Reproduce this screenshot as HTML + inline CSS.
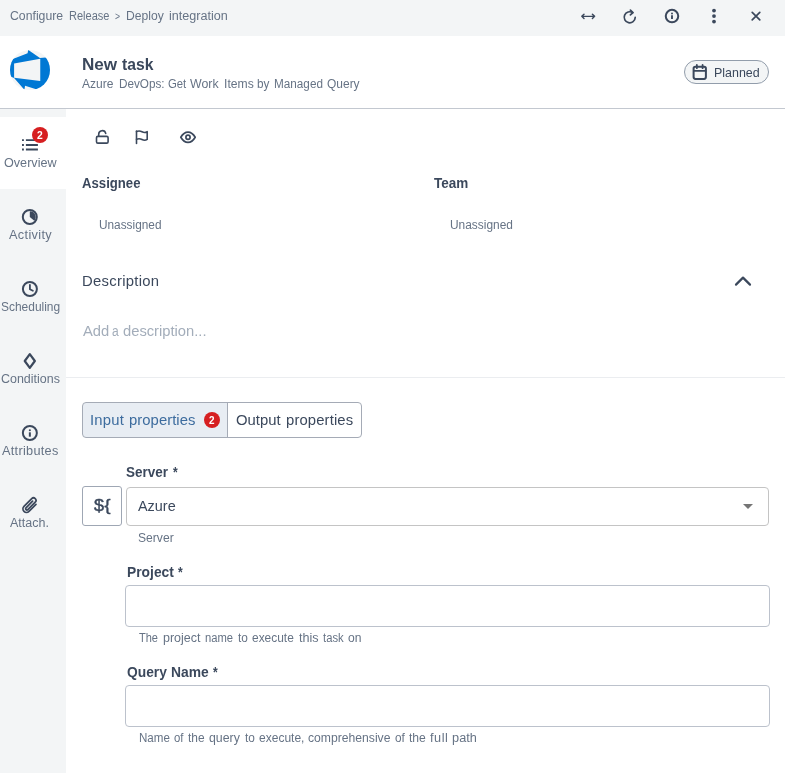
<!DOCTYPE html>
<html lang="en">
<head>
<meta charset="utf-8">
<title>New task</title>
<style>
html,body{margin:0;padding:0;}
body{width:785px;height:773px;overflow:hidden;background:#fff;font-family:"Liberation Sans",sans-serif;position:relative;}
.abs{position:absolute;box-sizing:border-box;}
.t{position:absolute;white-space:pre;transform-origin:0 0;font-family:"Liberation Sans",sans-serif;}
svg{position:absolute;left:0;top:0;overflow:visible;}
</style>
</head>
<body>
<!-- top bar -->
<div class="abs" style="left:0;top:0;width:785px;height:36px;background:#f3f5f6;"></div>
<!-- header border -->
<div class="abs" style="left:0;top:108px;width:785px;height:1px;background:#c3c8d0;"></div>
<!-- sidebar -->
<div class="abs" style="left:0;top:109px;width:66px;height:664px;background:#f3f5f6;"></div>
<div class="abs" style="left:0;top:117px;width:66px;height:72px;background:#fff;"></div>
<!-- description separator -->
<div class="abs" style="left:66px;top:377px;width:719px;height:1px;background:#ebedf0;"></div>
<!-- status chip -->
<div class="abs" style="left:684px;top:60px;width:85px;height:24px;border:1px solid #929dab;border-radius:12px;background:#f3f5f6;"></div>
<!-- tabs -->
<div class="abs" style="left:82px;top:402px;width:280px;height:36px;border:1px solid #a5abb6;border-radius:4px;background:linear-gradient(to right,#e8edf3 0,#e8edf3 144px,#a5abb6 144px,#a5abb6 145px,#fff 145px);"></div>
<!-- variable button -->
<div class="abs" style="left:82px;top:486px;width:40px;height:40px;border:1px solid #9fa7b4;border-radius:3px;background:#fff;"></div>
<!-- select -->
<div class="abs" style="left:126px;top:487px;width:643px;height:39px;border:1px solid #c4c4c4;border-radius:4px;background:#fff;"></div>
<!-- inputs -->
<div class="abs" style="left:125px;top:585px;width:645px;height:42px;border:1px solid #bcc2cc;border-radius:4px;background:#fff;"></div>
<div class="abs" style="left:125px;top:685px;width:645px;height:42px;border:1px solid #bcc2cc;border-radius:4px;background:#fff;"></div>

<svg width="785" height="773" viewBox="0 0 785 773" fill="none" stroke="#3b485c" stroke-width="1.8" stroke-linecap="round" stroke-linejoin="round">
  <!-- logo -->
  <defs><clipPath id="lc"><circle cx="30" cy="70" r="20"/></clipPath></defs>
  <circle cx="30" cy="70" r="20" fill="#f3f5f6" stroke="none"/>
  <g clip-path="url(#lc)" stroke="none" fill="#0078d4">
    <path fill-rule="evenodd" d="M28.2 49.9L39.95 58L45.6 57.55L53 57V92H45L25.05 85.75L24.4 89.7L14.1 78L11.1 76.7L7 75V61L13.5 58.8L27.6 53.35ZM14.1 63.6L40.25 58.75V80.9L14.1 77.7Z"/>
  </g>
  <!-- top bar icons -->
  <g id="i-expand" stroke-width="1.45"><path d="M581.800 16.350H594.600M584 14.150l-2.200 2.200 2.200 2.200M592.400 14.150l2.200 2.200-2.200 2.200"/></g>
  <g id="i-refresh" stroke-width="1.7" transform="translate(0.1 0.35)"><path d="M632.6 12.3A5.5 5.5 0 1 0 635.1 17.1"/><path d="M630.3 9.7l2.6 2.5-2.6 2.4"/></g>
  <g id="i-info" stroke-width="2"><circle cx="672" cy="16.1" r="6.25"/><path d="M672 15.2V19" stroke-width="1.9" stroke-linecap="butt"/><circle cx="672" cy="13.5" r="0.95" fill="#3b485c" stroke="none"/></g>
  <g id="i-kebab" fill="#3b485c" stroke="none"><circle cx="714" cy="10.6" r="1.9"/><circle cx="714" cy="16.1" r="1.9"/><circle cx="714" cy="21.6" r="1.9"/></g>
  <g id="i-close" stroke-width="1.7"><path d="M752.200 12.300l7.600 7.600M759.800 12.300l-7.600 7.600"/></g>
  <!-- calendar -->
  <g id="i-cal" stroke-width="2"><rect x="693.6" y="66.75" width="12.3" height="12.15" rx="1.8"/><path d="M694 70.9H705.5" stroke-width="1.9"/><path d="M696.85 65V68.2M702.6 65V68.2" stroke-width="1.8"/></g>
  <!-- toolbar icons -->
  <g id="i-lock" stroke-width="1.6"><rect x="96.5" y="136.4" width="11.6" height="6.7" rx="1.4"/><path d="M98.7 136.2V134.4a3.55 3.55 0 0 1 7 -1"/></g>
  <g id="i-flag" stroke-width="1.6"><path d="M136.5 131V143.4"/><path d="M136.5 131.500c2.200-.800 4.000-.500 5.500.300s3.600.900 5.200-.100V139.400c-1.600 1-3.700.900-5.200.100s-3.300-1.100-5.500-.300"/></g>
  <g id="i-eye" stroke-width="1.7"><path d="M180.800 137.200c2-3.400 4.400-5.100 7.200-5.100s5.200 1.700 7.200 5.100c-2 3.400-4.400 5.100-7.200 5.100s-5.200-1.700-7.200-5.100z"/><circle cx="188" cy="137.200" r="2.100"/></g>
  <!-- chevron -->
  <path d="M736 284.6l7-7 7 7" stroke-width="2.2"/>
  <!-- select arrow -->
  <path d="M743 504h10l-5 5z" fill="#757575" stroke="none"/>
  <!-- sidebar icons -->
  <g id="s-overview" stroke-width="1.9" stroke-linecap="butt"><path d="M25.900 140.100H37.900M25.900 144.950H37.900M25.900 149.550H37.900"/><path d="M22 140.100h1.900M22 144.950h1.900M22 149.550h1.900"/></g>
  <g id="s-activity" stroke-width="2"><circle cx="29.800" cy="217" r="7"/><path d="M29.800 211.200A5.800 5.800 0 0 1 34.300 220.700L29.800 217z" fill="#3b485c" stroke="none"/></g>
  <g id="s-sched" stroke-width="2"><circle cx="29.900" cy="289" r="7"/><path d="M29.900 284.800V289.200l3 1.500" stroke-width="1.8"/></g>
  <g id="s-cond" stroke-width="2.2"><path d="M29.800 354.100l5.050 6.900-5.050 6.900-5.050-6.900z"/></g>
  <g id="s-attr" stroke-width="2"><circle cx="29.850" cy="433" r="7"/><path d="M29.850 432.300V436.700" stroke-width="2" stroke-linecap="butt"/><circle cx="29.850" cy="430.200" r="1.050" fill="#3b485c" stroke="none"/></g>
  <g id="s-attach" stroke-width="1.65" transform="translate(29.5 504.9) scale(1.06) translate(-29.5 -504.1)"><path d="M35.600 503.600l-6.600 6.600a3.300 3.300 0 0 1-4.700-4.700l7.300-7.300a2.300 2.300 0 0 1 3.300 3.300l-7 7a1.200 1.200 0 0 1-1.700-1.700l6.200-6.200"/></g>
</svg>
<div class="abs" style="left:204px;top:412px;width:16px;height:16px;border-radius:8px;background:#d61f21;"></div>
<!-- sidebar badge -->
<div class="abs" style="left:32px;top:127px;width:16px;height:16px;border-radius:8px;background:#d61f21;"></div>

<div id="txt" style="position:absolute;left:0;top:0;width:785px;height:773px;will-change:transform;">
<span class="t" style="left:10.40px;top:9.00px;font-size:12px;line-height:14px;font-weight:400;color:#667385;letter-spacing:0.000px;transform:scaleX(1.0218);">Configure </span>
<span class="t" style="left:68.50px;top:9.00px;font-size:12px;line-height:14px;font-weight:400;color:#667385;letter-spacing:0.000px;transform:scaleX(0.9199);">Release</span>
<span class="t" style="left:115.32px;top:11.00px;font-size:10px;line-height:11px;font-weight:400;color:#667385;letter-spacing:0.000px;transform:scaleX(0.8600);">&gt;</span>
<span class="t" style="left:126.10px;top:9.00px;font-size:12px;line-height:14px;font-weight:400;color:#667385;letter-spacing:0.000px;transform:scaleX(1.0093);">Deploy </span>
<span class="t" style="left:168.90px;top:9.00px;font-size:12px;line-height:14px;font-weight:400;color:#667385;letter-spacing:0.000px;transform:scaleX(1.0494);">integration</span>
<span class="t" style="left:81.86px;top:55.00px;font-size:16.5px;line-height:18px;font-weight:700;color:#3b485c;letter-spacing:0.000px;transform:scaleX(1.0365);">New </span>
<span class="t" style="left:122.30px;top:55.00px;font-size:16.5px;line-height:18px;font-weight:700;color:#3b485c;letter-spacing:0.000px;transform:scaleX(0.9513);">task</span>
<span class="t" style="left:82.10px;top:77.00px;font-size:12px;line-height:14px;font-weight:400;color:#667385;letter-spacing:0.000px;transform:scaleX(1.0040);">Azure </span>
<span class="t" style="left:118.50px;top:77.00px;font-size:12px;line-height:14px;font-weight:400;color:#667385;letter-spacing:0.000px;transform:scaleX(0.9774);">DevOps: </span>
<span class="t" style="left:167.90px;top:77.00px;font-size:12px;line-height:14px;font-weight:400;color:#667385;letter-spacing:0.000px;transform:scaleX(0.9446);">Get </span>
<span class="t" style="left:190.30px;top:77.00px;font-size:12px;line-height:14px;font-weight:400;color:#667385;letter-spacing:0.000px;transform:scaleX(1.0285);">Work </span>
<span class="t" style="left:223.69px;top:77.00px;font-size:12px;line-height:14px;font-weight:400;color:#667385;letter-spacing:0.000px;transform:scaleX(1.0128);">Items </span>
<span class="t" style="left:257.40px;top:77.00px;font-size:12px;line-height:14px;font-weight:400;color:#667385;letter-spacing:0.000px;transform:scaleX(0.9784);">by </span>
<span class="t" style="left:274.20px;top:77.00px;font-size:12px;line-height:14px;font-weight:400;color:#667385;letter-spacing:0.000px;transform:scaleX(0.9784);">Managed </span>
<span class="t" style="left:326.90px;top:77.00px;font-size:12px;line-height:14px;font-weight:400;color:#667385;letter-spacing:0.000px;transform:scaleX(0.9976);">Query</span>
<span class="t" style="left:713.74px;top:65.00px;font-size:13px;line-height:15px;font-weight:400;color:#3b485c;letter-spacing:0.000px;transform:scaleX(0.9574);">Planned</span>
<span class="t" style="left:3.50px;top:156.00px;font-size:12px;line-height:14px;font-weight:400;color:#667385;letter-spacing:0.000px;transform:scaleX(1.0508);">Overview</span>
<span class="t" style="left:8.70px;top:228.00px;font-size:12px;line-height:14px;font-weight:400;color:#667385;letter-spacing:0.326px;transform:scaleX(1.0600);">Activity</span>
<span class="t" style="left:0.90px;top:300.00px;font-size:12px;line-height:14px;font-weight:400;color:#667385;letter-spacing:0.000px;transform:scaleX(0.9965);">Scheduling</span>
<span class="t" style="left:0.50px;top:372.00px;font-size:12px;line-height:14px;font-weight:400;color:#667385;letter-spacing:0.000px;transform:scaleX(1.0388);">Conditions</span>
<span class="t" style="left:1.70px;top:444.00px;font-size:12px;line-height:14px;font-weight:400;color:#667385;letter-spacing:0.269px;transform:scaleX(1.0600);">Attributes</span>
<span class="t" style="left:10.40px;top:516.00px;font-size:12px;line-height:14px;font-weight:400;color:#667385;letter-spacing:0.000px;transform:scaleX(1.0427);">Attach.</span>
<span class="t" style="left:82.00px;top:175.00px;font-size:14px;line-height:16px;font-weight:700;color:#3b485c;letter-spacing:0.000px;transform:scaleX(0.9398);">Assignee</span>
<span class="t" style="left:434.20px;top:175.00px;font-size:14px;line-height:16px;font-weight:700;color:#3b485c;letter-spacing:0.000px;transform:scaleX(0.9634);">Team</span>
<span class="t" style="left:98.80px;top:218.00px;font-size:12px;line-height:14px;font-weight:400;color:#667385;letter-spacing:0.000px;transform:scaleX(0.9856);">Unassigned</span>
<span class="t" style="left:450.00px;top:218.00px;font-size:12px;line-height:14px;font-weight:400;color:#667385;letter-spacing:0.000px;transform:scaleX(0.9920);">Unassigned</span>
<span class="t" style="left:81.64px;top:273.00px;font-size:14px;line-height:16px;font-weight:400;color:#3b485c;letter-spacing:0.261px;transform:scaleX(1.0600);">Description</span>
<span class="t" style="left:82.50px;top:323.00px;font-size:14px;line-height:16px;font-weight:400;color:#a3adba;letter-spacing:0.000px;transform:scaleX(1.0529);">Add </span>
<span class="t" style="left:111.86px;top:323.00px;font-size:14px;line-height:16px;font-weight:400;color:#a3adba;letter-spacing:0.000px;transform:scaleX(0.8600);">a </span>
<span class="t" style="left:123.20px;top:323.00px;font-size:14px;line-height:16px;font-weight:400;color:#a3adba;letter-spacing:0.000px;transform:scaleX(1.0525);">description...</span>
<span class="t" style="left:90.04px;top:412.00px;font-size:14px;line-height:16px;font-weight:400;color:#3d6c9e;letter-spacing:0.197px;transform:scaleX(1.0600);">Input </span>
<span class="t" style="left:128.80px;top:412.00px;font-size:14px;line-height:16px;font-weight:400;color:#3d6c9e;letter-spacing:0.043px;transform:scaleX(1.0600);">properties</span>
<span class="t" style="left:235.80px;top:412.00px;font-size:14px;line-height:16px;font-weight:400;color:#3b485c;letter-spacing:0.006px;transform:scaleX(1.0600);">Output </span>
<span class="t" style="left:286.30px;top:412.00px;font-size:14px;line-height:16px;font-weight:400;color:#3b485c;letter-spacing:0.116px;transform:scaleX(1.0600);">properties</span>
<span class="t" style="left:126.30px;top:464.00px;font-size:14px;line-height:16px;font-weight:700;color:#3b485c;letter-spacing:0.000px;transform:scaleX(0.9627);">Server </span>
<span class="t" style="left:173.17px;top:464.00px;font-size:14px;line-height:16px;font-weight:700;color:#3b485c;letter-spacing:0.000px;transform:scaleX(0.8600);">*</span>
<span class="t" style="left:93.60px;top:496.00px;font-size:17px;line-height:19px;font-weight:400;color:#3b485c;letter-spacing:0.394px;transform:scaleX(1.0600);-webkit-text-stroke:0.45px #3b485c;">${</span>
<span class="t" style="left:138.10px;top:498.00px;font-size:14px;line-height:16px;font-weight:400;color:#3b485c;letter-spacing:0.000px;transform:scaleX(1.0303);">Azure</span>
<span class="t" style="left:138.10px;top:531.00px;font-size:12px;line-height:14px;font-weight:400;color:#667385;letter-spacing:0.000px;transform:scaleX(1.0100);">Server</span>
<span class="t" style="left:126.80px;top:564.00px;font-size:14px;line-height:16px;font-weight:700;color:#3b485c;letter-spacing:0.000px;transform:scaleX(0.9875);">Project </span>
<span class="t" style="left:177.97px;top:564.00px;font-size:14px;line-height:16px;font-weight:700;color:#3b485c;letter-spacing:0.000px;transform:scaleX(0.8600);">*</span>
<span class="t" style="left:138.60px;top:631.00px;font-size:12px;line-height:14px;font-weight:400;color:#667385;letter-spacing:0.000px;transform:scaleX(0.9189);">The </span>
<span class="t" style="left:162.80px;top:631.00px;font-size:12px;line-height:14px;font-weight:400;color:#667385;letter-spacing:0.000px;transform:scaleX(1.0413);">project </span>
<span class="t" style="left:205.40px;top:631.00px;font-size:12px;line-height:14px;font-weight:400;color:#667385;letter-spacing:0.000px;transform:scaleX(0.9359);">name </span>
<span class="t" style="left:238.40px;top:631.00px;font-size:12px;line-height:14px;font-weight:400;color:#667385;letter-spacing:0.000px;transform:scaleX(0.9870);">to </span>
<span class="t" style="left:252.40px;top:631.00px;font-size:12px;line-height:14px;font-weight:400;color:#667385;letter-spacing:0.000px;transform:scaleX(0.9940);">execute </span>
<span class="t" style="left:298.80px;top:631.00px;font-size:12px;line-height:14px;font-weight:400;color:#667385;letter-spacing:0.000px;transform:scaleX(1.0496);">this </span>
<span class="t" style="left:322.50px;top:631.00px;font-size:12px;line-height:14px;font-weight:400;color:#667385;letter-spacing:0.000px;transform:scaleX(0.9388);">task </span>
<span class="t" style="left:348.30px;top:631.00px;font-size:12px;line-height:14px;font-weight:400;color:#667385;letter-spacing:-0.000px;transform:scaleX(1.0100);">on</span>
<span class="t" style="left:126.50px;top:664.00px;font-size:14px;line-height:16px;font-weight:700;color:#3b485c;letter-spacing:0.000px;transform:scaleX(0.9858);">Query </span>
<span class="t" style="left:171.40px;top:664.00px;font-size:14px;line-height:16px;font-weight:700;color:#3b485c;letter-spacing:0.000px;transform:scaleX(0.9884);">Name </span>
<span class="t" style="left:213.07px;top:664.00px;font-size:14px;line-height:16px;font-weight:700;color:#3b485c;letter-spacing:0.000px;transform:scaleX(0.8600);">*</span>
<span class="t" style="left:138.80px;top:731.00px;font-size:12px;line-height:14px;font-weight:400;color:#667385;letter-spacing:0.000px;transform:scaleX(0.9649);">Name </span>
<span class="t" style="left:173.90px;top:731.00px;font-size:12px;line-height:14px;font-weight:400;color:#667385;letter-spacing:0.000px;transform:scaleX(0.9462);">of </span>
<span class="t" style="left:187.90px;top:731.00px;font-size:12px;line-height:14px;font-weight:400;color:#667385;letter-spacing:0.000px;transform:scaleX(0.9937);">the </span>
<span class="t" style="left:209.30px;top:731.00px;font-size:12px;line-height:14px;font-weight:400;color:#667385;letter-spacing:0.000px;transform:scaleX(1.0294);">query </span>
<span class="t" style="left:244.80px;top:731.00px;font-size:12px;line-height:14px;font-weight:400;color:#667385;letter-spacing:0.000px;transform:scaleX(0.9870);">to </span>
<span class="t" style="left:258.80px;top:731.00px;font-size:12px;line-height:14px;font-weight:400;color:#667385;letter-spacing:0.000px;transform:scaleX(1.0016);">execute, </span>
<span class="t" style="left:308.30px;top:731.00px;font-size:12px;line-height:14px;font-weight:400;color:#667385;letter-spacing:0.000px;transform:scaleX(1.0134);">comprehensive </span>
<span class="t" style="left:394.90px;top:731.00px;font-size:12px;line-height:14px;font-weight:400;color:#667385;letter-spacing:0.000px;transform:scaleX(0.9837);">of </span>
<span class="t" style="left:409.20px;top:731.00px;font-size:12px;line-height:14px;font-weight:400;color:#667385;letter-spacing:0.000px;transform:scaleX(1.0113);">the </span>
<span class="t" style="left:430.20px;top:731.00px;font-size:12px;line-height:14px;font-weight:400;color:#667385;letter-spacing:0.518px;transform:scaleX(1.0600);">full </span>
<span class="t" style="left:451.50px;top:731.00px;font-size:12px;line-height:14px;font-weight:400;color:#667385;letter-spacing:0.050px;transform:scaleX(1.0600);">path</span>
<span class="t" style="left:36.90px;top:130.00px;font-size:10px;line-height:11px;font-weight:700;color:#fff;letter-spacing:0.000px;transform:scaleX(1.0333);">2</span>
<span class="t" style="left:209.25px;top:415.00px;font-size:10px;line-height:11px;font-weight:700;color:#fff;letter-spacing:0.000px;transform:scaleX(0.9917);">2</span>
</div>
</body>
</html>
